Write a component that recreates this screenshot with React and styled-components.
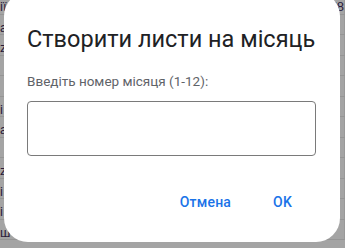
import styled, { createGlobalStyle } from "styled-components";

const GlobalStyle = createGlobalStyle`
  html, body {
    margin: 0;
    padding: 0;
    background: #a4a4a4;
    overflow: hidden;
  }
  #root {
    position: relative;
    width: 345px;
    height: 248px;
    overflow: hidden;
  }
`;

const leftCells = ["іїр", "а", "z", "", "", "і", "а", "", "z", "і", "і", "ш"];
const rightCells = ["7, '8", "", "", "", "", "", "", "", "", "", "", ""];

export default function App() {
  return (
    <>
      <GlobalStyle />
      <Sheet>
        {leftCells.map((txt, i) => (
          <SheetRow key={i}>
            <Cell>{txt}</Cell>
            <Cell />
            <Cell />
            <Cell $right>{rightCells[i]}</Cell>
          </SheetRow>
        ))}
      </Sheet>
      <Dialog>
        <Title>Створити листи на місяць</Title>
        <Label>Введіть номер місяця (1-12):</Label>
        <Input />
        <Actions>
          <TextButton>Отмена</TextButton>
          <TextButton>OK</TextButton>
        </Actions>
      </Dialog>
    </>
  );
}

const Sheet = styled.div`
  display: flex;
  flex-direction: column;
  margin-top: -6px;
`;

const SheetRow = styled.div`
  display: grid;
  grid-template-columns: 85px 100px 102px 58px;
  height: 20.5px;
  border-bottom: 1px solid #959595;
  box-sizing: border-box;
`;

const Cell = styled.div`
  border-right: 1px solid #999;
  font-family: "Liberation Sans", Arial, sans-serif;
  font-size: 13px;
  line-height: 20px;
  padding-top: 3px;
  color: #2a1a3a;
  overflow: hidden;
  white-space: nowrap;
  text-align: ${(p) => (p.$right ? "right" : "left")};
`;

const Dialog = styled.div`
  position: absolute;
  left: 4px;
  top: -8px;
  width: 336px;
  height: 250px;
  box-sizing: border-box;
  background: #fff;
  border-radius: 24px;
  padding: 31px 24px 0 23px;
  display: flex;
  flex-direction: column;
`;

const Title = styled.div`
  font-family: Roboto, "Noto Sans", sans-serif;
  font-size: 23.5px;
  line-height: 32px;
  color: #202124;
  white-space: nowrap;
`;

const Label = styled.div`
  margin-top: 16px;
  font-family: Roboto, "Noto Sans", sans-serif;
  font-size: 13.5px;
  line-height: 20px;
  color: #5f6368;
`;

const Input = styled.div`
  margin-top: 10px;
  width: 289px;
  height: 55px;
  box-sizing: border-box;
  border: 1px solid #7a7a7a;
  border-radius: 4px;
`;

const Actions = styled.div`
  display: flex;
  justify-content: flex-end;
  gap: 6px;
  margin-top: 28px;
  padding-right: 6px;
`;

const TextButton = styled.div`
  font-family: Roboto, "Noto Sans", sans-serif;
  font-size: 14px;
  font-weight: 500;
  color: #1a73e8;
  line-height: 36px;
  padding: 0 18px;
  letter-spacing: 0.2px;
`;
